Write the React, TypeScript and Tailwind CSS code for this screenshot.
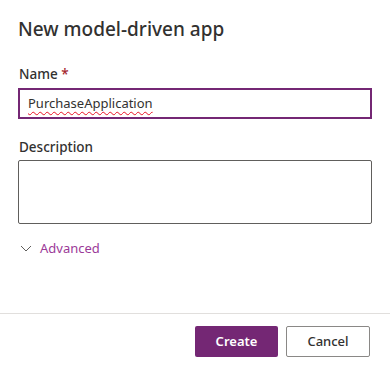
export default function App() {
  return (
    <main
      className="flex h-[371px] w-[390px] flex-col bg-white text-[#323130]"
      style={{ fontFamily: '"Noto Sans", "Open Sans", sans-serif' }}
    >
      <div className="flex-1 px-[18px] pt-[15px]">
        <h1 className="text-[19px] font-medium leading-[28px] text-[#323130]">New model-driven app</h1>

        <div className="mt-[21px]">
          <label className="block pl-[1px] text-[13.5px] font-medium leading-[20px]">
            Name <span className="text-[#a4262c]">*</span>
          </label>
          <div className="mt-[4px] flex h-[31px] items-center border-2 border-[#742774] px-[8px] text-[13px]">
            <span className="underline decoration-wavy decoration-[#e81123] decoration-1 underline-offset-[3px]">
              PurchaseApplication
            </span>
          </div>
        </div>

        <div className="mt-[18px]">
          <label className="block pl-[1px] text-[13.5px] font-medium leading-[20px]">Description</label>
          <div className="mt-[3px] h-[64px] rounded-[2px] border border-[#605e5c]" />
        </div>

        <button className="mt-[14px] flex items-center gap-[8px] pl-[2px] text-[13px] leading-[20px] text-[#9b3a98]">
          <svg width="12" height="12" viewBox="0 0 12 12" fill="none" stroke="#605e5c" strokeWidth="1">
            <path d="M1 4l5 5 5-5" />
          </svg>
          Advanced
        </button>
      </div>

      <div className="border-t border-[#e1dfdd]">
        <div className="flex justify-end gap-[8px] px-[20px] pt-[12px] pb-[14px]">
          <button className="h-[31px] w-[83px] rounded-[2px] bg-[#742774] text-[13px] font-semibold text-white">
            Create
          </button>
          <button className="h-[31px] w-[84px] rounded-[2px] border border-[#8a8886] bg-white text-[13px] font-medium text-[#323130]">
            Cancel
          </button>
        </div>
      </div>
    </main>
  );
}
